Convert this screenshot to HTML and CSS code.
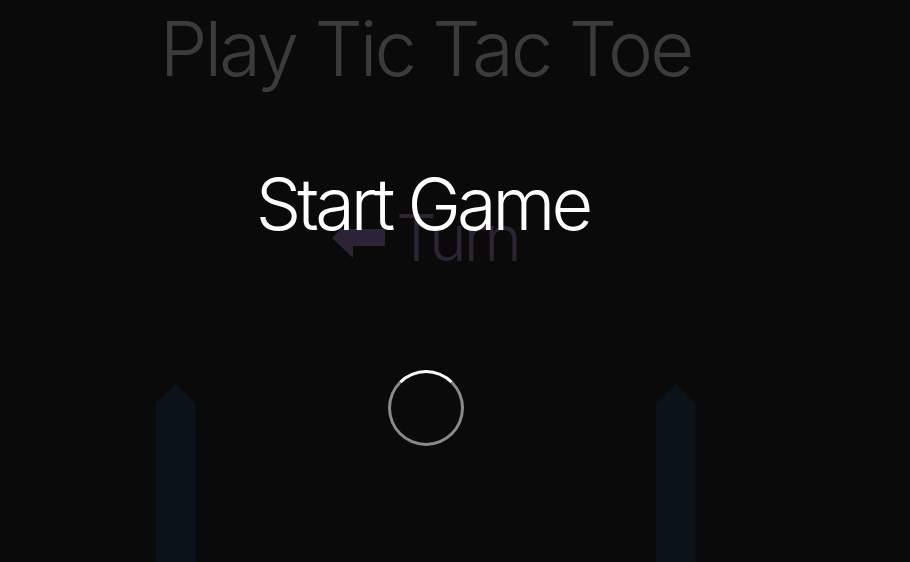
FILE: index.html
```html
<!DOCTYPE html>
<html lang="en">
<head>
<meta charset="utf-8">
<title>Play Tic Tac Toe</title>
<link rel="stylesheet" href="styles.css">
</head>
<body>
<div class="page">
  <h1 class="title">Play Tic Tac Toe</h1>
  <div class="turn">
    <svg class="turn-arrow" width="54" height="30" viewBox="0 0 54 30"><polygon points="0,9 9,0 53,0 53,17 21,17 21,29" fill="currentColor"/></svg>
    <span class="turn-label">Turn</span>
  </div>
  <div class="board">
    <div class="pencil"></div>
    <div class="pencil"></div>
  </div>
  <div class="overlay">
    <div class="start">Start Game</div>
    <div class="spinner"></div>
  </div>
</div>
</body>
</html>
```
FILE: styles.css
```css
html, body {
  margin: 0;
  height: 100%;
  background: #0a0a0a;
  overflow: hidden;
}
body {
  font-family: Inter, "Noto Sans", sans-serif;
}
.page {
  position: relative;
  width: 851px;
  height: 562px;
  display: flex;
  flex-direction: column;
  align-items: center;
}
.title {
  margin: 10px 0 0;
  font-size: 76px;
  line-height: 1;
  font-weight: 300;
  color: #3b3b3b;
  letter-spacing: -3px;
}
.turn {
  margin-top: 120px;
  display: flex;
  align-items: center;
  gap: 10px;
  color: #2c2337;
}
.turn-arrow {
  margin-top: 12px;
}
.turn-label {
  font-size: 64px;
  line-height: 1;
  font-weight: 300;
  letter-spacing: -3px;
}
.board {
  margin-top: 114px;
  flex: 1;
  display: flex;
  gap: 460px;
}
.pencil {
  width: 40px;
  background: #0b1219;
  clip-path: polygon(50% 0, 100% 19px, 100% 100%, 0 100%, 0 19px);
}
.overlay {
  position: absolute;
  inset: 0;
  display: flex;
  flex-direction: column;
  align-items: center;
}
.start {
  margin: 168px 6px 0 0;
  font-size: 72px;
  line-height: 1;
  font-weight: 300;
  color: #ffffff;
  letter-spacing: -4px;
}
.spinner {
  margin-top: 130px;
  width: 70px;
  height: 70px;
  border-radius: 50%;
  border: 3px solid #8a8a8a;
  border-top-color: #ffffff;
}
```
